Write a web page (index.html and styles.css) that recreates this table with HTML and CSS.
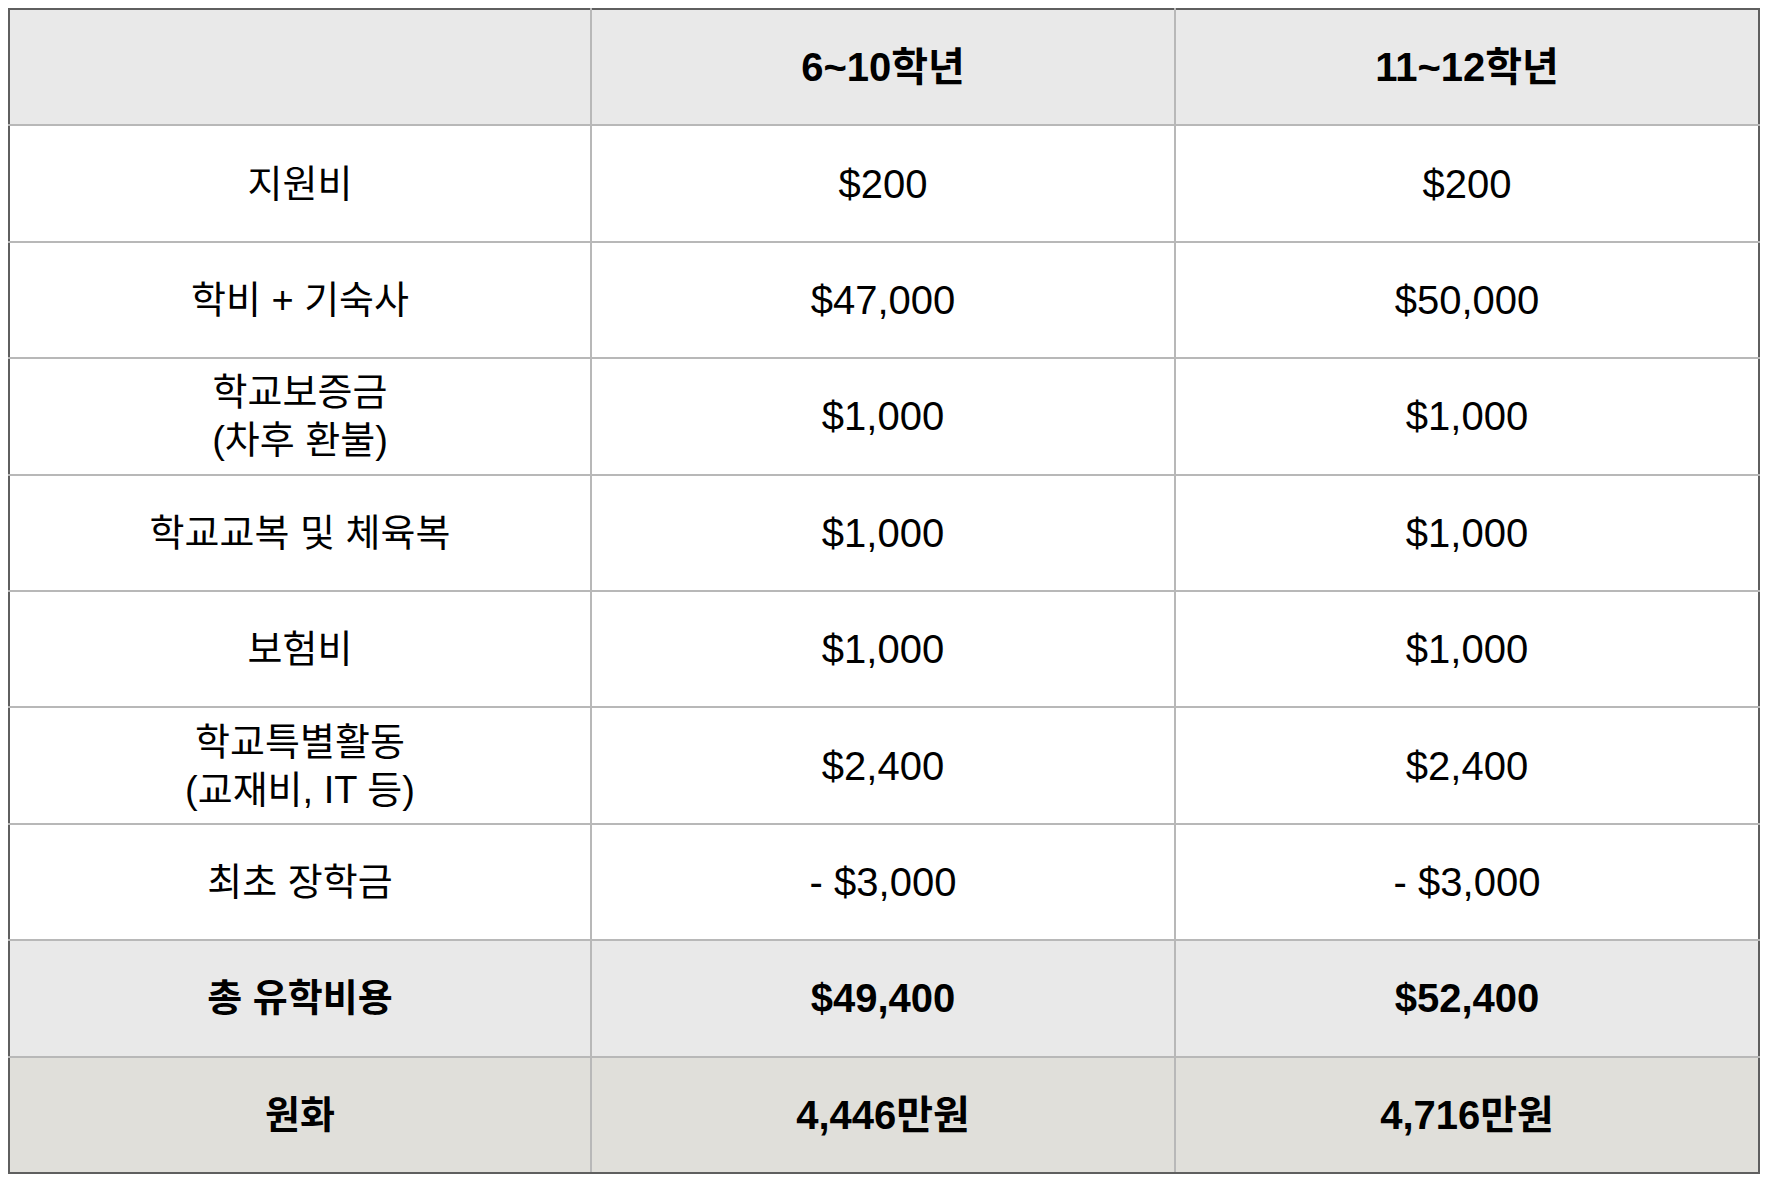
FILE: index.html
```html
<!DOCTYPE html>
<html lang="ko">
<head>
<meta charset="utf-8">
<link rel="stylesheet" href="styles.css">
</head>
<body>
<table class="fees">
  <colgroup><col class="c1"><col class="c2"><col class="c3"></colgroup>
  <tr class="head">
    <th></th><th class="num">6~10학년</th><th class="num">11~12학년</th>
  </tr>
  <tr><td>지원비</td><td class="num">$200</td><td class="num">$200</td></tr>
  <tr><td>학비 + 기숙사</td><td class="num">$47,000</td><td class="num">$50,000</td></tr>
  <tr><td>학교보증금<br>(차후 환불)</td><td class="num">$1,000</td><td class="num">$1,000</td></tr>
  <tr><td>학교교복 및 체육복</td><td class="num">$1,000</td><td class="num">$1,000</td></tr>
  <tr><td>보험비</td><td class="num">$1,000</td><td class="num">$1,000</td></tr>
  <tr><td>학교특별활동<br>(교재비, IT 등)</td><td class="num">$2,400</td><td class="num">$2,400</td></tr>
  <tr><td>최초 장학금</td><td class="num">- $3,000</td><td class="num">- $3,000</td></tr>
  <tr class="total"><td>총 유학비용</td><td class="num">$49,400</td><td class="num">$52,400</td></tr>
  <tr class="krw"><td>원화</td><td class="num">4,446만원</td><td class="num">4,716만원</td></tr>
</table>
</body>
</html>
```
FILE: styles.css
```css
html, body {
  margin: 0;
  padding: 0;
  background: #ffffff;
}
body {
  padding: 8px 0 0 8px;
  font-family: "Liberation Sans", "Noto Sans CJK KR", sans-serif;
  color: #000;
}
.fees {
  border-collapse: collapse;
  width: 1750px;
  table-layout: fixed;
  border: 2px solid #5f5f5f;
  font-size: 38px;
  line-height: 48px;
}
.c1 { width: 582px; }
.c2 { width: 584px; }
.c3 { width: 584px; }
.fees th,
.fees td {
  border: 2px solid #b8b8b8;
  text-align: center;
  vertical-align: middle;
  padding: 0;
  height: 114.4px;
  font-weight: normal;
}
.fees .num { font-size: 40px; }
.fees tr:first-child th { border-top: 2px solid #5f5f5f; }
.fees tr:last-child td { border-bottom: 2px solid #5f5f5f; }
.fees th:first-child, .fees td:first-child { border-left: 2px solid #5f5f5f; }
.fees th:last-child, .fees td:last-child { border-right: 2px solid #5f5f5f; }
.head th {
  background: #e9e9e9;
  font-weight: bold;
}
.total td {
  background: #e9e9e9;
  font-weight: bold;
}
.krw td {
  background: #e0dfda;
  font-weight: bold;
}
```
